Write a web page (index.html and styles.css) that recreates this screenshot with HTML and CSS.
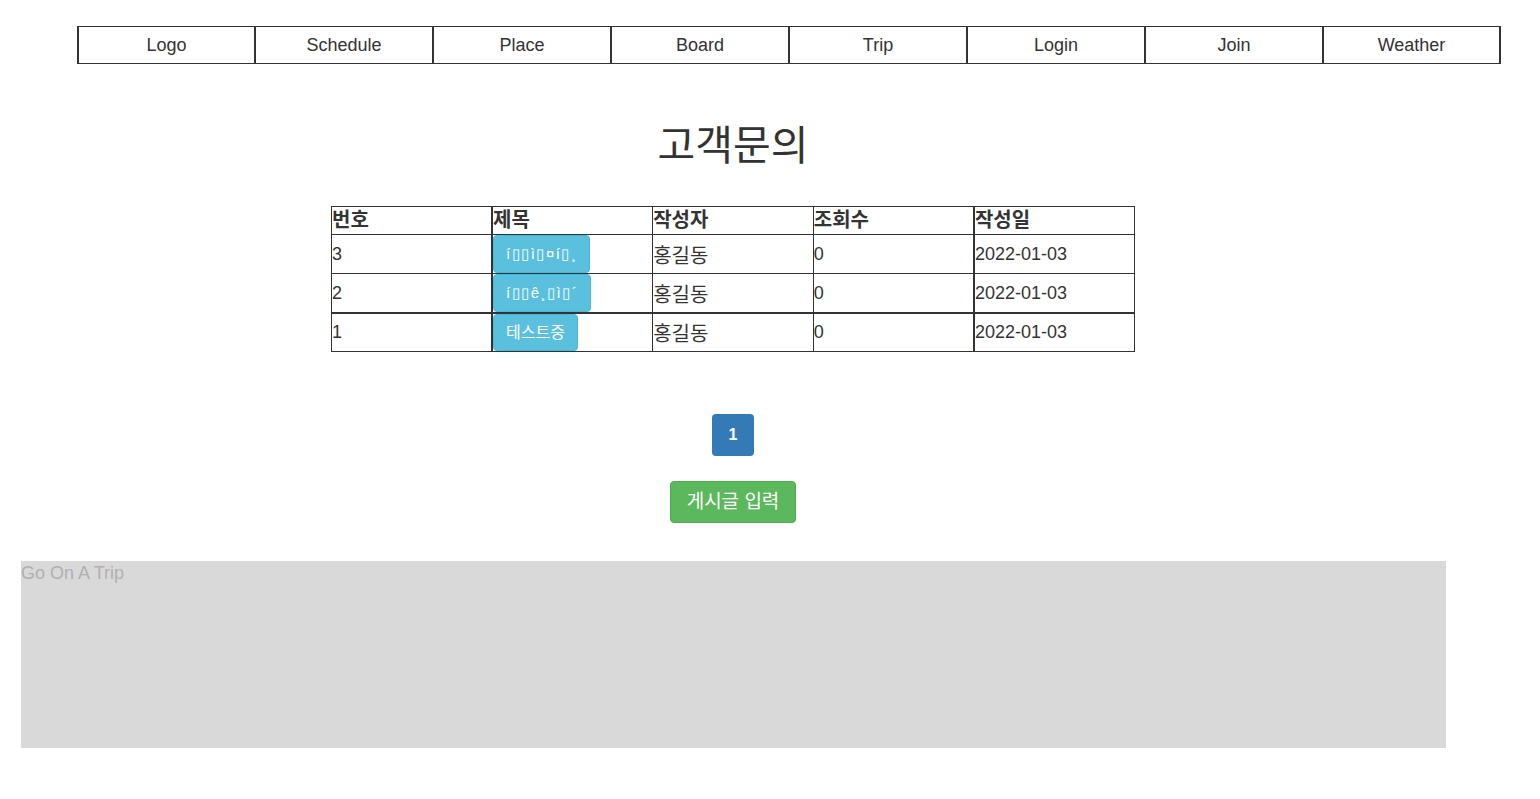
FILE: index.html
```html
<!DOCTYPE html>
<html lang="ko">
<head>
  <meta charset="UTF-8">
  <title>고객문의</title>
  <link rel="stylesheet" href="styles.css">
</head>
<body>
  <nav class="top-nav">
    <ul>
      <li><a href="#">Logo</a></li>
      <li><a href="#">Schedule</a></li>
      <li><a href="#">Place</a></li>
      <li><a href="#">Board</a></li>
      <li><a href="#">Trip</a></li>
      <li><a href="#">Login</a></li>
      <li><a href="#">Join</a></li>
      <li><a href="#">Weather</a></li>
    </ul>
  </nav>

  <main class="board">
    <h1 class="board-title">고객문의</h1>

    <table class="board-table">
      <thead>
        <tr>
          <th>번호</th>
          <th>제목</th>
          <th>작성자</th>
          <th>조회수</th>
          <th>작성일</th>
        </tr>
      </thead>
      <tbody>
        <tr>
          <td>3</td>
          <td><a href="#" class="btn btn-info broken">í▯▯ì▯¤í▯¸</a></td>
          <td class="writer">홍길동</td>
          <td>0</td>
          <td>2022-01-03</td>
        </tr>
        <tr>
          <td>2</td>
          <td><a href="#" class="btn btn-info broken">í▯▯ê¸▯ì▯´</a></td>
          <td class="writer">홍길동</td>
          <td>0</td>
          <td>2022-01-03</td>
        </tr>
        <tr class="last-row">
          <td>1</td>
          <td><a href="#" class="btn btn-info">테스트중</a></td>
          <td class="writer">홍길동</td>
          <td>0</td>
          <td>2022-01-03</td>
        </tr>
      </tbody>
    </table>

    <ul class="pagination">
      <li class="active"><a href="#">1</a></li>
    </ul>

    <a href="#" class="btn btn-success">게시글 입력</a>
  </main>

  <footer class="footer">Go On A Trip</footer>
</body>
</html>
```

FILE: styles.css
```css
* {
  box-sizing: border-box;
}
body {
  margin: 0;
  font-family: "Liberation Sans", "Noto Sans CJK KR", sans-serif;
  color: #333;
  background: #fff;
}
a {
  text-decoration: none;
}
.top-nav ul {
  display: flex;
  list-style: none;
  margin: 26px 0 0 77px;
  padding: 0;
}
.top-nav li {
  width: 178px;
  height: 38px;
  border: 1px solid #333;
  text-align: center;
  line-height: 36px;
  font-size: 18px;
}
.top-nav li:first-child {
  border-left-width: 2px;
}
.top-nav li:last-child {
  border-right-width: 2px;
}
.top-nav a {
  color: #333;
}
.board {
  width: 1466px;
  display: flex;
  flex-direction: column;
  align-items: center;
}
.board-title {
  margin: 55px 0 0;
  font-size: 41px;
  line-height: 46px;
  font-weight: normal;
  font-family: "Noto Sans CJK KR", sans-serif;
}
.board-table {
  margin-top: 41px;
  width: 804px;
  border-collapse: collapse;
  table-layout: fixed;
  font-size: 18px;
}
.board-table th,
.board-table td {
  border: 1px solid #333;
  padding: 0;
  text-align: left;
  vertical-align: middle;
}
.board-table th {
  font-size: 20px;
  font-weight: bold;
  line-height: 27px;
}
.board-table td {
  height: 38px;
}
.board-table td.writer {
  font-size: 20px;
}
.board-table th:nth-child(2),
.board-table td:nth-child(2),
.board-table th:nth-child(5),
.board-table td:nth-child(5) {
  border-left-width: 2px;
}
.board-table .last-row td {
  border-top-width: 2px;
  height: 36px;
}
.btn {
  display: inline-block;
  border: 1px solid transparent;
  border-radius: 4px;
  color: #fff;
  text-align: center;
  white-space: nowrap;
}
.btn-info {
  background: #5bc0de;
  border-color: #46b8da;
  padding: 8px 12px;
  font-size: 16px;
  line-height: 20px;
  vertical-align: middle;
}
.btn-info.broken {
  font-size: 15px;
  letter-spacing: 1.5px;
}
.last-row .btn-info {
  padding-bottom: 7px;
}
.btn-success {
  margin-top: 25px;
  background: #5cb85c;
  border-color: #4cae4c;
  padding: 8px 16px;
  font-size: 19px;
  line-height: 24px;
}
.pagination {
  display: flex;
  list-style: none;
  margin: 62px 0 0;
  padding: 0;
}
.pagination a {
  display: block;
  width: 42px;
  height: 42px;
  line-height: 42px;
  text-align: center;
  border-radius: 4px;
  font-size: 16px;
  font-weight: bold;
}
.pagination .active a {
  background: #337ab7;
  color: #fff;
}
.footer {
  margin: 38px 0 0 21px;
  width: 1425px;
  height: 187px;
  background: #d9d9d9;
  color: #b0b0b0;
  font-size: 18px;
  line-height: 24px;
}
```
